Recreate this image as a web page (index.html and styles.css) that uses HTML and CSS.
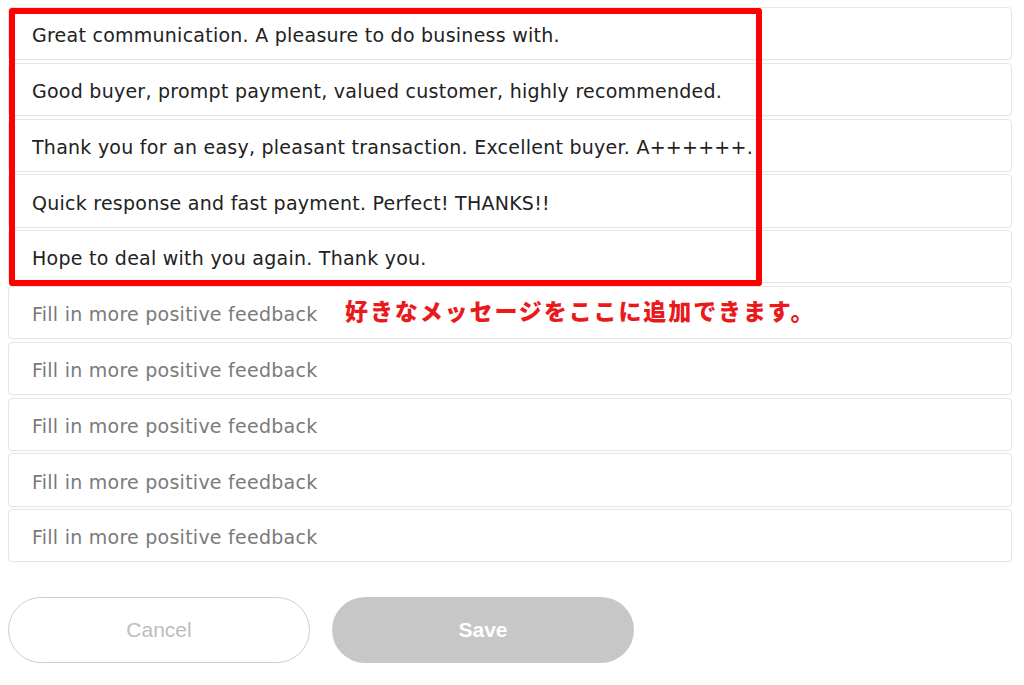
FILE: index.html
```html
<!DOCTYPE html>
<html>
<head>
<meta charset="utf-8">
<link rel="stylesheet" href="styles.css">
</head>
<body>
<div class="page">
  <div class="list">
    <input class="field" value="Great communication. A pleasure to do business with.">
    <input class="field" value="Good buyer, prompt payment, valued customer, highly recommended.">
    <input class="field" value="Thank you for an easy, pleasant transaction. Excellent buyer. A++++++.">
    <input class="field" value="Quick response and fast payment. Perfect! THANKS!!">
    <input class="field" value="Hope to deal with you again. Thank you.">
    <input class="field" placeholder="Fill in more positive feedback">
    <input class="field" placeholder="Fill in more positive feedback">
    <input class="field" placeholder="Fill in more positive feedback">
    <input class="field" placeholder="Fill in more positive feedback">
    <input class="field" placeholder="Fill in more positive feedback">
    <div class="highlight"></div>
    <div class="note">好きなメッセージをここに追加できます。</div>
  </div>
  <div class="actions">
    <button class="btn btn-cancel">Cancel</button>
    <button class="btn btn-save">Save</button>
  </div>
</div>
</body>
</html>
```
FILE: styles.css
```css
html, body {
  margin: 0;
  padding: 0;
  background: #ffffff;
}
.page {
  padding: 7px 12px 0 8px;
}
.list {
  position: relative;
  display: flex;
  flex-direction: column;
  gap: 2.5px;
}
.field {
  display: block;
  box-sizing: border-box;
  width: 100%;
  height: 53.3px;
  margin: 0;
  padding: 3px 0 0 23px;
  border: 1px solid #e6e6e6;
  border-radius: 4px;
  background: #fff;
  font-family: "DejaVu Sans", Verdana, sans-serif;
  font-size: 19px;
  letter-spacing: 0.25px;
  color: #222;
  outline: none;
  box-shadow: 0 1px 1px rgba(0,0,0,0.03);
}
.field::placeholder {
  color: #7a7a7a;
  opacity: 1;
}
.highlight {
  position: absolute;
  left: 1px;
  top: 1px;
  width: 753px;
  height: 278px;
  box-sizing: border-box;
  border: 6px solid #ff0000;
  border-radius: 3px;
  pointer-events: none;
}
.note {
  position: absolute;
  left: 337px;
  top: 286px;
  font-family: "Noto Sans CJK JP", sans-serif;
  font-weight: 900;
  font-size: 23px;
  letter-spacing: 1.9px;
  color: #ea1a1c;
  line-height: 34px;
}
.actions {
  display: flex;
  gap: 22px;
  margin-top: 35px;
}
.btn {
  width: 302px;
  height: 66px;
  border-radius: 33px;
  font-family: "Liberation Sans", Arial, sans-serif;
  font-size: 21px;
  cursor: pointer;
}
.btn-cancel {
  background: #fff;
  border: 1px solid #cfcfcf;
  color: #bdbdbd;
}
.btn-save {
  background: #c7c7c7;
  border: none;
  color: #fff;
  font-weight: 700;
}
```
